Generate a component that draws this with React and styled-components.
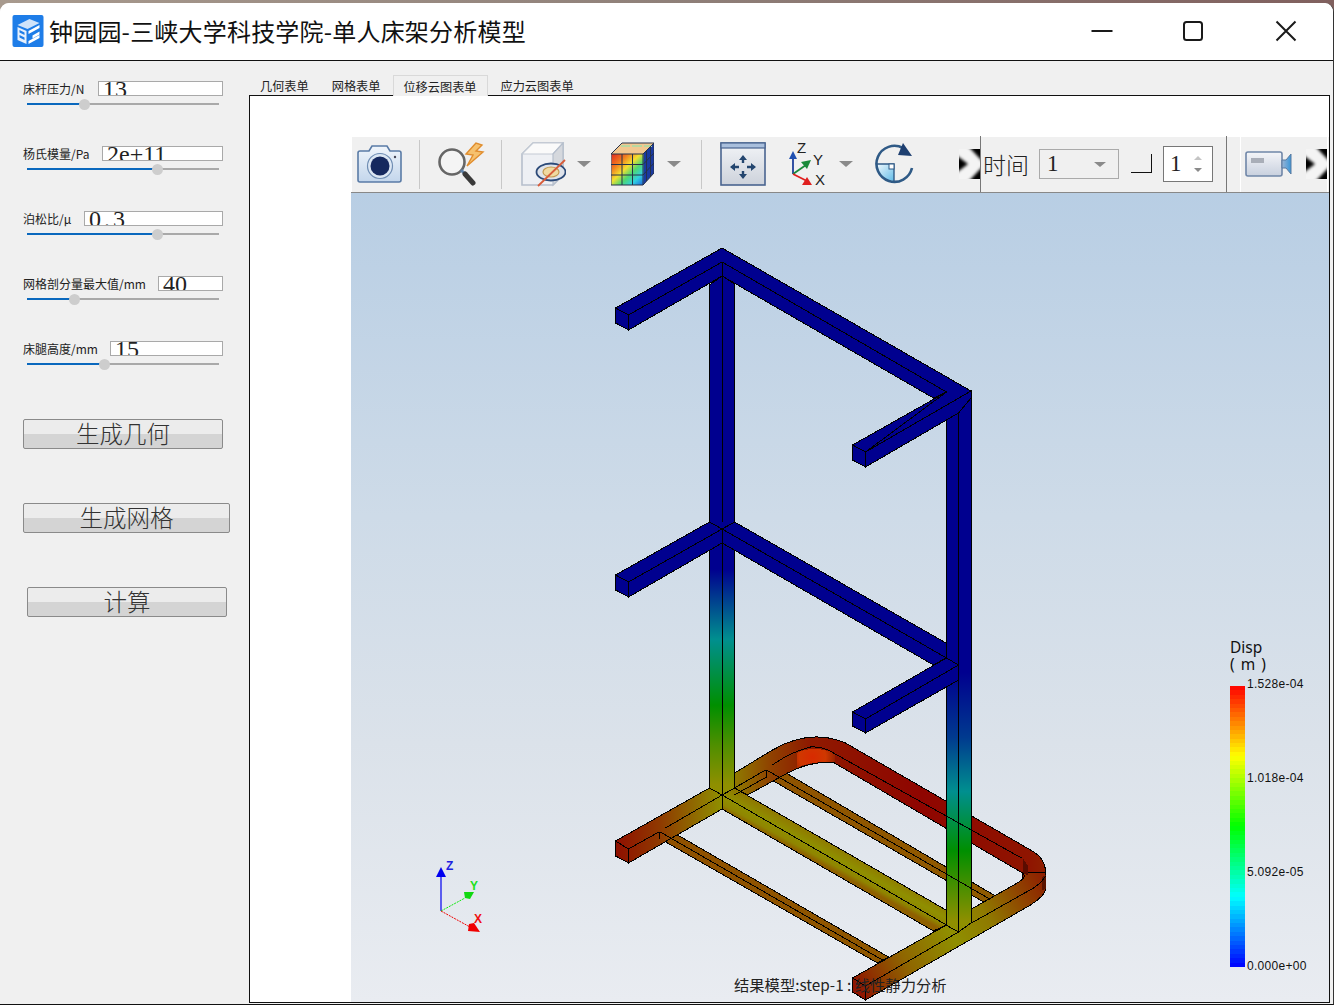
import React from 'react';
import styled, { createGlobalStyle } from 'styled-components';

const SANS = '"Noto Sans CJK SC", "Noto Sans", sans-serif';
const SERIF = '"Liberation Serif", "Noto Sans CJK SC", serif';

const GlobalStyle = createGlobalStyle`
  html, body {
    margin: 0;
    height: 1005px;
    overflow: hidden;
    background: linear-gradient(to right, #a89a8e, #8f8079 50%, #80605e);
  }
  * { box-sizing: border-box; }
`;

const FIELDS = [
  { label: '床杆压力/N', value: '13', width: 125, pos: 57 },
  { label: '杨氏模量/Pa', value: '2e+11', width: 121, pos: 130 },
  { label: '泊松比/μ', value: '0.3', width: 139, pos: 130, track: 3 },
  { label: '网格剖分量最大值/mm', value: '40', width: 65, pos: 47 },
  { label: '床腿高度/mm', value: '15', width: 113, pos: 77 },
];

const BUTTONS = [
  { text: '生成几何', width: 200, left: 0 },
  { text: '生成网格', width: 207, left: 0 },
  { text: '计算', width: 200, left: 4 },
];

const TABS = [
  { text: '几何表单', ml: 11 },
  { text: '网格表单', ml: 23 },
  { text: '位移云图表单', ml: 12, active: true },
  { text: '应力云图表单', ml: 13 },
];

// jet colour map cut into 64 flat bands, like the solver's legend
function jetBands() {
  const stops = [];
  const n = 64;
  for (let i = 0; i < n; i++) {
    const t = 1 - (i + 0.5) / n;
    const channel = (c) => Math.round(255 * Math.max(0, Math.min(1, 2 - Math.abs(4 * t - c))));
    const color = `rgb(${channel(4)},${channel(2)},${channel(0)})`;
    stops.push(`${color} ${(i / n) * 100}% ${((i + 1) / n) * 100}%`);
  }
  return stops.join(',');
}

const Window = styled.div`
  margin-top: 3px;
  width: 1334px;
  height: 1002px;
  display: flex;
  flex-direction: column;
  background: #f0f0f0;
  border-radius: 9px 9px 0 0;
  border-right: 1px solid #333;
  border-bottom: 1px solid #111;
  overflow: hidden;
  font-family: ${SANS};
`;

const TitleBar = styled.header`
  height: 58px;
  flex-shrink: 0;
  display: flex;
  align-items: center;
  padding: 0 36px 1px 12px;
  background: #fff;
  border-bottom: 1px solid #111;
`;

const AppIcon = styled.svg`
  display: block;
  flex-shrink: 0;
`;

const Title = styled.h1`
  margin: 0 0 0 5px;
  flex: 1;
  font-size: 24px;
  font-weight: 400;
  line-height: 32px;
  letter-spacing: 0.2px;
  color: #111;
  white-space: nowrap;
`;

const WinButton = styled.svg`
  display: block;
  flex-shrink: 0;
  margin-left: ${(p) => p.$ml}px;
`;

const Body = styled.div`
  flex: 1;
  display: flex;
  min-height: 0;
`;

const Sidebar = styled.aside`
  width: 249px;
  flex-shrink: 0;
  padding: 20px 0 0 23px;
`;

const Field = styled.div`
  height: 65px;
`;

const FieldRow = styled.div`
  width: 200px;
  height: 15px;
  display: flex;
  justify-content: space-between;
  align-items: center;
`;

const FieldLabel = styled.label`
  font-size: 12px;
  line-height: 15px;
  color: #222;
  white-space: nowrap;
  margin-top: -1px;
`;

const FieldValue = styled.div`
  width: ${(p) => p.$width}px;
  height: 15px;
  flex-shrink: 0;
  padding-left: 4px;
  background: #fff;
  border: 1px solid #a9a9a9;
  overflow: hidden;
  font-family: ${SERIF};
  font-size: 24px;
  line-height: 14px;
  letter-spacing: ${(p) => p.$track || 0}px;
  color: #222;
`;

const Slider = styled.div`
  position: relative;
  width: 192px;
  height: 2px;
  margin: 7px 0 0 4px;
  background: linear-gradient(to right, #0a68bd ${(p) => p.$pos}px, #a9a9a9 ${(p) => p.$pos}px);
`;

const SliderHandle = styled.span`
  position: absolute;
  left: ${(p) => p.$pos - 5}px;
  top: -4px;
  width: 11px;
  height: 11px;
  border-radius: 50%;
  background: #cdcdcd;
`;

const Actions = styled.div`
  margin-top: 13px;
  display: flex;
  flex-direction: column;
  align-items: flex-start;
  gap: 54px;
`;

const ActionButton = styled.button`
  width: ${(p) => p.$width}px;
  height: 30px;
  margin-left: ${(p) => p.$left}px;
  padding: 0 0 2px 0;
  border: 1px solid #8a8a8a;
  border-radius: 2px;
  background: linear-gradient(to bottom, #ececec 50%, #d4d4d4 50%);
  font-family: ${SANS};
  font-size: 23.5px;
  font-weight: 300;
  line-height: 26px;
  color: #333;
`;

const Main = styled.main`
  flex: 1;
  min-width: 0;
  display: flex;
  flex-direction: column;
  padding: 14px 3px 1px 0;
`;

const TabStrip = styled.nav`
  height: 20px;
  flex-shrink: 0;
  display: flex;
  align-items: stretch;
  position: relative;
  z-index: 1;
`;

const Tab = styled.div`
  margin-left: ${(p) => p.$ml}px;
  padding: 3px 0 0;
  width: ${(p) => (p.$active ? '95px' : 'auto')};
  height: ${(p) => (p.$active ? '21px' : '20px')};
  text-align: center;
  font-size: 12.2px;
  line-height: 16px;
  color: #222;
  white-space: nowrap;
  background: ${(p) => (p.$active ? '#f0f0f0' : 'transparent')};
  border: ${(p) => (p.$active ? '1px solid #d9d9d9' : 'none')};
  border-bottom: none;
  overflow: hidden;
`;

const Pane = styled.section`
  flex: 1;
  min-height: 0;
  display: flex;
  flex-direction: column;
  padding: 40px 0 0 101px;
  background: #fff;
  border: 1px solid #111;
`;

const Toolbar = styled.div`
  height: 57px;
  flex-shrink: 0;
  display: flex;
  align-items: center;
  background: #f0f0f0;
  border-bottom: 1px solid #888;
  box-shadow: inset 1px 1px 0 #fff;
`;

const Tool = styled.svg`
  display: block;
  flex-shrink: 0;
  margin-left: ${(p) => p.$ml}px;
`;

const ToolSep = styled.span`
  width: 1px;
  height: 49px;
  flex-shrink: 0;
  margin-left: ${(p) => p.$ml}px;
  background: #c8c8c8;
`;

const ToolDivider = styled.span`
  width: 1px;
  align-self: stretch;
  flex-shrink: 0;
  margin-left: ${(p) => p.$ml}px;
  background: #777;
`;

const Caret = styled.span`
  width: 0;
  height: 0;
  flex-shrink: 0;
  margin-left: ${(p) => p.$ml || 0}px;
  border-left: ${(p) => p.$size}px solid transparent;
  border-right: ${(p) => p.$size}px solid transparent;
  border-top: ${(p) => (p.$up ? 'none' : `${p.$h}px solid ${p.$color}`)};
  border-bottom: ${(p) => (p.$up ? `${p.$h}px solid ${p.$color}` : 'none')};
`;

const TimeLabel = styled.span`
  width: 46px;
  margin-left: 2px;
  flex-shrink: 0;
  font-size: 23px;
  font-weight: 300;
  line-height: 30px;
  color: #222;
  white-space: nowrap;
`;

const Combo = styled.div`
  width: 80px;
  height: 30px;
  flex-shrink: 0;
  margin-left: 10px;
  padding: 0 12px 0 7px;
  display: flex;
  justify-content: space-between;
  align-items: center;
  border: 1px solid #aaa;
  font-family: ${SERIF};
  font-size: 23px;
  color: #222;
`;

const CornerMark = styled.span`
  width: 21px;
  height: 19px;
  flex-shrink: 0;
  margin: 0 0 0 12px;
  position: relative;
  top: -1px;
  border-right: 1px solid #111;
  border-bottom: 1px solid #111;
`;

const Spin = styled.div`
  width: 50px;
  height: 36px;
  flex-shrink: 0;
  margin-left: 11px;
  padding: 0 10px 0 6px;
  display: flex;
  justify-content: space-between;
  align-items: center;
  background: #fff;
  border: 1px solid #777;
  font-family: ${SERIF};
  font-size: 23px;
  color: #222;
`;

const SpinArrows = styled.span`
  display: flex;
  flex-direction: column;
  gap: 8px;
`;

const SecondBar = styled.div`
  width: 88px;
  height: 56px;
  flex-shrink: 0;
  margin-left: 13px;
  display: flex;
  align-items: center;
  box-shadow: inset 1px 1px 0 #fff, inset -1px 0 0 #fff;
`;

const Viewport = styled.div`
  flex: 1;
  min-height: 0;
  position: relative;
  overflow: hidden;
  background: linear-gradient(to bottom, #b8cee4, #cedbe8 40%, #dbe2ea 68%, #e9ecf1);
`;

const Model = styled.svg`
  position: absolute;
  inset: 0;
  width: 100%;
  height: 100%;
  shape-rendering: crispEdges;
`;

const Triad = styled.svg`
  position: absolute;
  left: 79px;
  bottom: 70px;
`;

const Legend = styled.div`
  position: absolute;
  left: 879px;
  top: 445px;
  color: #111;
`;

const LegendTitle = styled.div`
  font-family: "Noto Sans", sans-serif;
  font-size: 15.5px;
  line-height: 17px;
  height: 48px;
  white-space: pre;
  word-spacing: 2px;
  padding-top: 1px;
`;

const LegendBody = styled.div`
  display: flex;
  align-items: flex-start;
`;

const LegendBar = styled.div`
  width: 15px;
  height: 281px;
  flex-shrink: 0;
  background: linear-gradient(to bottom, ${jetBands()});
`;

const LegendTicks = styled.div`
  height: 296px;
  margin: -9px 0 0 2px;
  display: flex;
  flex-direction: column;
  justify-content: space-between;
  font-family: "Liberation Sans", sans-serif;
  font-size: 12px;
  line-height: 14px;
  letter-spacing: 0.3px;
`;

const Caption = styled.div`
  position: absolute;
  left: 383px;
  bottom: 8px;
  font-size: 15.3px;
  line-height: 20px;
  color: #222;
  white-space: nowrap;
`;

const BLUE = '#00008f';

const VERT_L = [
  [0, BLUE], [0.565, BLUE], [0.625, '#00408f'], [0.7, '#008f8f'], [0.827, '#008f00'], [0.904, '#4f8f00'], [0.98, '#8f8f00'],
];
const VERT_R = [
  [0, BLUE], [0.52, BLUE], [0.64, '#003a8f'], [0.74, '#008f8f'], [0.85, '#008f00'], [0.98, '#8f8f00'],
];

function Stops({ list }) {
  return list.map(([o, c]) => <stop key={o} offset={o} stopColor={c} />);
}

function Grad({ id, from, to, list }) {
  return (
    <linearGradient id={id} gradientUnits="userSpaceOnUse" x1={from[0]} y1={from[1]} x2={to[0]} y2={to[1]}>
      <Stops list={list} />
    </linearGradient>
  );
}

// faces in page pixels, painted back to front. edges are the fold lines on top of them
const FACES = [
  // thin cross bars
  { d: 'M772,765 L995,896 L985,903 L766,777 L766,770 Z', fill: 'url(#thin)' },
  { d: 'M665,828 L888,957 L877,963 L659,838.5 L659,831.6 Z', fill: 'url(#thin)' },
  // rounded tube, back and right side
  { d: 'M734,773 L772,750 Q810,728 845,743 L1030,850 Q1045,858 1045,872 L1045,889 L1022,884 L1022,873 L834,763 Q812,760 787,773 L747,795 L734,788 Z', fill: 'url(#tubeBack)' },
  { d: 'M796,753 Q812,745 834,753 L834,763 Q812,760 796,768 Z', fill: 'url(#hot)', bare: true },
  // rounded tube, front side
  { d: 'M971,909 L1015,884 Q1028,877 1022,873 L1045,872 L1045,889 Q1045,895 1030,905 L865,1000 L852,992 L852,978 L946,925 Z', fill: 'url(#tubeFront)' },
  { d: 'M1022,858 L1027,865 L1027,875 L1022,873 Z', fill: '#5a0c00', bare: true },
  { d: 'M1045,875 L1041,878 L1041,890 L1045,889 Z', fill: '#5a1400', bare: true },
  // thick bars of the floor frame
  { d: 'M734,788 L945.5,910 L945.5,925 L933,931 L721.6,809 L721.6,795 Z', fill: 'url(#center)' },
  { d: 'M615,841 L709,788 L721.6,795 L721.6,809 L628,863 L615,856 Z', fill: 'url(#armLeft)' },
  // uprights
  { d: 'M709,285 L721.6,276 L734,284 L734,788 L721.6,795 L709,788 Z', fill: 'url(#vertL)' },
  { d: 'M945.5,392 L970.5,391 L970.5,923 L958,932 L945.5,925 Z', fill: 'url(#vertR)' },
  // top frame
  { d: 'M615,308 L721.6,248 L970.5,391 L970.5,398 L958,413 L865,467 L852,460 L852,445 L946,392 L933,398 L721.6,276 L628,330 L615,323 Z', fill: BLUE },
  // middle frame
  { d: 'M615,575 L709,522 L721.6,529 L734,522 L945.5,643 L945.5,658 L933,665 L721.6,543 L628,597 L615,590 Z', fill: BLUE },
  { d: 'M852,712 L946,658 L958,665 L958,680 L865,733 L852,726 Z', fill: BLUE },
];

const EDGES = [
  // top frame
  'M615,308 L628,315 L628,330',
  'M628,315 L721.6,262 L946,392 L865,452',
  'M721.6,262 V276',
  'M852,445 L865,452 V467',
  'M865,452 L970.5,391',
  // uprights
  'M721.6,276 V522',
  'M721.6,543 V795',
  'M958,413 V664',
  'M958,680 V932',
  'M945.5,419 V643',
  'M945.5,686 V925 L958,932 L970.5,923',
  // middle frame
  'M615,575 L628,582 L628,597',
  'M628,582 L721.6,529 L946,658 L958,665',
  'M721.6,529 V543',
  'M852,712 L865,719 V733',
  'M865,719 L958,665',
  // floor
  'M615,841 L628,849 L628,863',
  'M628,849 L659,831.6',
  'M665,828 L721.6,795',
  'M721.6,795 L946,925',
  'M659,831.6 L883,960.6',
  'M659,831.6 V838.5',
  'M766,770 L990,899.5',
  'M766,770 V777',
  'M734,788 L765,770',
  'M734,795 L766,777',
  'M772,765 Q790,752 810,747 Q822,746 833,753 L1021,858',
  'M787,773 Q812,760 834,763',
  'M852,978 L865,986 V1000',
  'M865,986 L958,932',
  'M971,923 L1033,888 Q1041,883 1045,876',
];

function BedFrame() {
  return (
    <Model viewBox="350.5 193 978 809">
      <defs>
        <Grad id="vertL" from={[0, 276]} to={[0, 795]} list={VERT_L} />
        <Grad id="vertR" from={[0, 391]} to={[0, 932]} list={VERT_R} />
        <Grad id="thin" from={[650, 830]} to={[1000, 900]} list={[[0, '#8f5000'], [1, '#8f5a00']]} />
        <Grad id="armLeft" from={[615, 0]} to={[721, 0]} list={[[0, '#8f0f00'], [0.42, '#8f3a00'], [0.9, '#8f8000'], [1, '#8f8f00']]} />
        <Grad id="center" from={[730, 786]} to={[718, 808]} list={[[0, '#8f7500'], [0.5, '#8f8f00'], [0.8, '#8f8500'], [1, '#8f6000']]} />
        <Grad id="tubeBack" from={[734, 0]} to={[1045, 0]} list={[[0, '#8f7a00'], [0.12, '#8f4000'], [0.24, '#8f1a00'], [0.6, '#8f0500'], [0.95, '#8f1500'], [1, '#8f1f00']]} />
        <Grad id="tubeFront" from={[858, 990]} to={[1045, 880]} list={[[0, '#8f1500'], [0.25, '#8f6500'], [0.5, '#8f8f00'], [0.68, '#8f7a00'], [0.88, '#8f4000'], [1, '#8f2000']]} />
        <radialGradient id="hot" gradientUnits="userSpaceOnUse" cx="812" cy="757" r="24">
          <stop offset="0" stopColor="#d82a00" />
          <stop offset="0.55" stopColor="#d03800" />
          <stop offset="1" stopColor="#8f2000" />
        </radialGradient>
      </defs>
      {FACES.map((f) => (
        <path key={f.d} d={f.d} fill={f.fill} stroke={f.bare ? 'none' : '#000'} strokeWidth="1" />
      ))}
      {EDGES.map((d) => (
        <path key={d} d={d} fill="none" stroke="#000" strokeWidth="1" />
      ))}
    </Model>
  );
}

function AxisTriad() {
  return (
    <Triad width="56" height="82" viewBox="0 0 56 82">
      <path d="M11,61 V26" stroke="#0000f0" strokeWidth="1.2" />
      <path d="M11,17 L16,27 H6 Z" fill="#0000f0" />
      <path d="M11,61 L35,48" stroke="#10e810" strokeWidth="1" strokeDasharray="2 1" />
      <path d="M34,42 L44,42 L40,49 L35,48 Z" fill="#10d810" />
      <path d="M11,61 L40,77" stroke="#f00000" strokeWidth="1" strokeDasharray="2 1" />
      <path d="M39,74 L44,73 L50,82 L38,81 Z" fill="#f00000" />
      <text x="16" y="20" fontFamily="Liberation Sans" fontWeight="700" fontSize="12" fill="#2020e0">Z</text>
      <text x="40" y="40" fontFamily="Liberation Sans" fontWeight="700" fontSize="12" fill="#20e020">Y</text>
      <text x="44" y="73" fontFamily="Liberation Sans" fontWeight="700" fontSize="12" fill="#f01010">X</text>
    </Triad>
  );
}

function CameraIcon() {
  return (
    <Tool $ml={6} width="45" height="38" viewBox="0 0 45 38">
      <defs>
        <linearGradient id="camBody" x1="0" y1="0" x2="0" y2="1">
          <stop offset="0" stopColor="#f0f5fb" />
          <stop offset="1" stopColor="#c3d6ec" />
        </linearGradient>
      </defs>
      <path d="M3,6 H12 L15,1 H30 L33,6 H42 Q44,6 44,8 V35 Q44,37 42,37 H3 Q1,37 1,35 V8 Q1,6 3,6 Z" fill="url(#camBody)" stroke="#5a7ba6" strokeWidth="1.6" />
      <circle cx="23" cy="21" r="12.5" fill="#dbe6f3" stroke="#6f8db3" strokeWidth="1.2" />
      <circle cx="23" cy="21" r="9.5" fill="#16295f" />
      <circle cx="38" cy="12" r="1.2" fill="#445" />
    </Tool>
  );
}

function SearchIcon() {
  return (
    <Tool $ml={18} width="47" height="44" viewBox="0 0 47 44">
      <path d="M38,1 L28,12 L35,13 L29,24 L45,10 L38,9 L44,3 Z" fill="#f6c16e" stroke="#e08d2e" strokeWidth="1.4" />
      <circle cx="14" cy="20" r="12.5" fill="#f4f4f4" stroke="#666" strokeWidth="2.6" />
      <path d="M23,28 L27,32" stroke="#5f83ab" strokeWidth="3" />
      <path d="M27,32 L35,41" stroke="#3a3a3a" strokeWidth="5" strokeLinecap="round" />
    </Tool>
  );
}

function HiddenBoxIcon() {
  return (
    <Tool $ml={19} width="45" height="45" viewBox="0 0 45 45">
      <path d="M1,12 L12,1 H42 V33 L32,43 H1 Z" fill="#eef0f4" stroke="#b6bfcc" strokeWidth="1.6" />
      <path d="M1,12 L12,1 H42 L32,12 Z" fill="#fafafa" stroke="#c3cad4" strokeWidth="1.2" />
      <path d="M32,12 L42,1 V33 L32,43 Z" fill="#d5d8dd" stroke="#b6bfcc" strokeWidth="1.2" />
      <ellipse cx="30" cy="30" rx="14.5" ry="8.5" fill="#dfe3ea" stroke="#2c4a78" strokeWidth="1.8" />
      <ellipse cx="30" cy="30" rx="8" ry="5" fill="#f0d9a0" stroke="#c49a50" strokeWidth="1.2" />
      <path d="M17,44 L44,18" stroke="#d85c3a" strokeWidth="1.8" />
    </Tool>
  );
}

function ColorCubeIcon() {
  return (
    <Tool $ml={20} width="43" height="44" viewBox="0 0 43 44">
      <defs>
        <linearGradient id="cubeFront" x1="0" y1="0" x2="1" y2="1">
          <stop offset="0" stopColor="#e02a20" />
          <stop offset="0.25" stopColor="#f07a20" />
          <stop offset="0.45" stopColor="#f4e030" />
          <stop offset="0.62" stopColor="#50d870" />
          <stop offset="0.8" stopColor="#30d0e0" />
          <stop offset="1" stopColor="#2060e0" />
        </linearGradient>
      </defs>
      <path d="M32,12 L43,1 V31 L32,43 Z" fill="#1a3aa0" />
      <path d="M0,12 L11,1 H43 L32,12 Z" fill="#f2c890" />
      <path d="M10,4 H19 M21,4 H31 M33,4 H41" stroke="#b8d8a0" strokeWidth="2.2" />
      <rect x="0.5" y="12" width="32" height="31" fill="url(#cubeFront)" />
      <path d="M11,12 V43 M21.5,12 V43 M0,22.5 H32 M0,33 H32 M35.5,8.5 V39 M39.5,4.5 V35 M32,22.5 L43,11 M32,33 L43,21" stroke="#26324a" strokeWidth="1" fill="none" />
      <path d="M0,12 L11,1 H43 V31 L32,43 H0 Z M0,12 H32 L43,1 M32,12 V43" fill="none" stroke="#26324a" strokeWidth="1" />
    </Tool>
  );
}

function FitIcon() {
  return (
    <Tool $ml={18} width="46" height="44" viewBox="0 0 46 44">
      <defs>
        <linearGradient id="fitBg" x1="0" y1="0" x2="0" y2="1">
          <stop offset="0" stopColor="#f2f4f7" />
          <stop offset="1" stopColor="#cdd2db" />
        </linearGradient>
      </defs>
      <rect x="1" y="1" width="44" height="42" fill="url(#fitBg)" stroke="#4a6590" strokeWidth="1.6" />
      <rect x="1" y="1" width="44" height="5" fill="#a9bfdc" stroke="#4a6590" strokeWidth="1.2" />
      <path d="M23,13 L27,18 H24.2 V21 H21.8 V18 H19 Z M23,37 L19,32 H21.8 V29 H24.2 V32 H27 Z M10,25 L15,21 V23.8 H19 V26.2 H15 V29 Z M36,25 L31,29 V26.2 H27 V23.8 H31 V21 Z" fill="#24466f" />
    </Tool>
  );
}

function AxesIcon() {
  return (
    <Tool $ml={21} width="38" height="46" viewBox="0 0 38 46">
      <path d="M6,33 V16" stroke="#1f3f9a" strokeWidth="1.8" />
      <path d="M6,10 L10,18 H2 Z" fill="#1f4fb0" />
      <path d="M6,33 L19,24" stroke="#1a8a3a" strokeWidth="1.8" />
      <path d="M24,19 L20,28 L14,21 Z" fill="#1a8a3a" />
      <path d="M6,33 L20,40" stroke="#e02020" strokeWidth="1.8" />
      <path d="M25,44 L15,44 L20,36 Z" fill="#e02020" />
      <text x="10" y="12" fontFamily="Liberation Sans" fontSize="15" fill="#222">Z</text>
      <text x="26" y="24" fontFamily="Liberation Sans" fontSize="15" fill="#222">Y</text>
      <text x="28" y="44" fontFamily="Liberation Sans" fontSize="15" fill="#222">X</text>
    </Tool>
  );
}

function RotateIcon() {
  return (
    <Tool $ml={21} width="41" height="42" viewBox="0 0 41 42">
      <defs>
        <linearGradient id="rotFill" x1="0" y1="0" x2="1" y2="1">
          <stop offset="0" stopColor="#f0f8fd" />
          <stop offset="1" stopColor="#62bce8" />
        </linearGradient>
      </defs>
      <path d="M3,21 H20 V38 Q4,37 3,21 Z" fill="url(#rotFill)" />
      <path d="M3,21 H20 V38" fill="none" stroke="#2f5a86" strokeWidth="1.4" />
      <rect x="15" y="21" width="5" height="5" fill="#fff" stroke="#2f5a86" strokeWidth="1" />
      <path d="M38,25 A18,18 0 1 1 29,5" fill="none" stroke="#2f5a86" strokeWidth="2.6" />
      <path d="M29,0 L38,13 L24,12 Z" fill="#1e3f70" />
    </Tool>
  );
}

function OverflowIcon({ ml, id }) {
  return (
    <Tool $ml={ml} width="21" height="30" viewBox="0 0 21 30">
      <defs>
        <filter id={id}>
          <feGaussianBlur stdDeviation="1.8" />
        </filter>
      </defs>
      <rect width="21" height="30" fill="#f4f4f4" />
      <g filter={`url(#${id})`}>
        <path d="M-3,6 L9,15 L-3,24 Z" fill="#000" />
        <path d="M9,-3 H24 V13 Z M9,33 H24 V17 Z" fill="#000" />
      </g>
    </Tool>
  );
}

function VideoIcon() {
  return (
    <Tool $ml={5} width="47" height="26" viewBox="0 0 47 26">
      <defs>
        <linearGradient id="vidBody" x1="0" y1="0" x2="0" y2="1">
          <stop offset="0" stopColor="#f4f5f8" />
          <stop offset="1" stopColor="#c8d0de" />
        </linearGradient>
        <linearGradient id="vidLens" x1="0" y1="0" x2="1" y2="0">
          <stop offset="0" stopColor="#9ab4d4" />
          <stop offset="1" stopColor="#3a96d8" />
        </linearGradient>
      </defs>
      <rect x="1" y="1" width="36" height="24" rx="2" fill="url(#vidBody)" stroke="#6f86a8" strokeWidth="1.6" />
      <rect x="6" y="7" width="13" height="5" fill="#a9aeb8" />
      <path d="M37,9 L41,9 L46,3 V23 L41,17 H37 Z" fill="url(#vidLens)" stroke="#5a7aa0" strokeWidth="1" />
    </Tool>
  );
}

function BrandIcon() {
  return (
    <AppIcon width="32" height="32" viewBox="0 0 31 32">
      <rect width="31" height="32" rx="2" fill="#1e7de8" />
      <path d="M5,10 L17,4 L27,8 L15,14 Z" fill="#cfe3fa" />
      <path d="M5,12 L14,16 V29 L5,25 Z" fill="#e6f0fc" />
      <path d="M7,15 L12,17.5 V20 L7,17.5 Z M7,20 L12,22.5 V25 L7,22.5 Z" fill="#1e7de8" />
      <path d="M16,16 L27,10 V13 L16,19 Z M20,20.5 L27,16.5 V19.5 L20,23.5 Z M16,26 L27,20 V23 L16,29 Z" fill="#fff" />
    </AppIcon>
  );
}

export default function App() {
  return (
    <>
      <GlobalStyle />
      <Window>
        <TitleBar>
          <BrandIcon />
          <Title>钟园园-三峡大学科技学院-单人床架分析模型</Title>
          <WinButton $ml={0} width="22" height="22" viewBox="0 0 22 22">
            <path d="M0.5,11 H21.5" stroke="#1a1a1a" strokeWidth="2" />
          </WinButton>
          <WinButton $ml={69} width="22" height="22" viewBox="0 0 22 22">
            <rect x="2" y="2" width="18" height="18" rx="2.5" fill="none" stroke="#1a1a1a" strokeWidth="2" />
          </WinButton>
          <WinButton $ml={71} width="22" height="22" viewBox="0 0 22 22">
            <path d="M1.5,1.5 L20.5,20.5 M20.5,1.5 L1.5,20.5" stroke="#1a1a1a" strokeWidth="2" />
          </WinButton>
        </TitleBar>
        <Body>
          <Sidebar>
            {FIELDS.map((f) => (
              <Field key={f.label}>
                <FieldRow>
                  <FieldLabel>{f.label}</FieldLabel>
                  <FieldValue $width={f.width} $track={f.track}>{f.value}</FieldValue>
                </FieldRow>
                <Slider $pos={f.pos}>
                  <SliderHandle $pos={f.pos} />
                </Slider>
              </Field>
            ))}
            <Actions>
              {BUTTONS.map((b) => (
                <ActionButton key={b.text} $width={b.width} $left={b.left}>{b.text}</ActionButton>
              ))}
            </Actions>
          </Sidebar>
          <Main>
            <TabStrip>
              {TABS.map((t) => (
                <Tab key={t.text} $ml={t.ml} $active={t.active}>{t.text}</Tab>
              ))}
            </TabStrip>
            <Pane>
              <Toolbar>
                <CameraIcon />
                <ToolSep $ml={17} />
                <SearchIcon />
                <ToolSep $ml={16} />
                <HiddenBoxIcon />
                <Caret $ml={11} $size={7} $h={6} $color="#8a8a8a" />
                <ColorCubeIcon />
                <Caret $ml={13} $size={7} $h={6} $color="#8a8a8a" />
                <ToolSep $ml={20} />
                <FitIcon />
                <AxesIcon />
                <Caret $ml={14} $size={7} $h={6} $color="#8a8a8a" />
                <RotateIcon />
                <OverflowIcon ml={44} id="moreA" />
                <ToolDivider $ml={0} />
                <TimeLabel>时间</TimeLabel>
                <Combo>
                  1
                  <Caret $size={6} $h={5} $color="#8a8a8a" />
                </Combo>
                <CornerMark />
                <Spin>
                  1
                  <SpinArrows>
                    <Caret $up $size={4} $h={4} $color="#c4c4c4" />
                    <Caret $size={4} $h={4} $color="#8a8a8a" />
                  </SpinArrows>
                </Spin>
                <ToolDivider $ml={13} />
                <SecondBar>
                  <VideoIcon />
                  <OverflowIcon ml={14} id="moreB" />
                </SecondBar>
              </Toolbar>
              <Viewport>
                <BedFrame />
                <AxisTriad />
                <Legend>
                  <LegendTitle>{'Disp\n( m )'}</LegendTitle>
                  <LegendBody>
                    <LegendBar />
                    <LegendTicks>
                      <span>1.528e-04</span>
                      <span>1.018e-04</span>
                      <span>5.092e-05</span>
                      <span>0.000e+00</span>
                    </LegendTicks>
                  </LegendBody>
                </Legend>
                <Caption>结果模型:step-1 : 线性静力分析</Caption>
              </Viewport>
            </Pane>
          </Main>
        </Body>
      </Window>
    </>
  );
}
